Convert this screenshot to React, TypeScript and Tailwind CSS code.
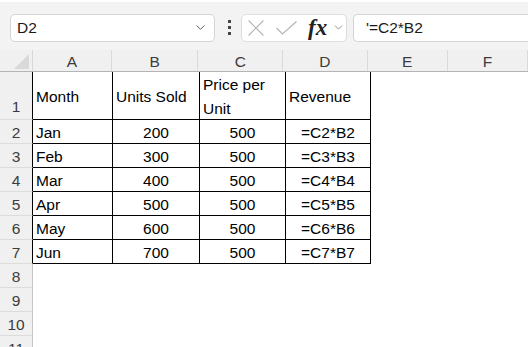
import { ChevronDown } from 'lucide-react'

const columns = [
  { key: 'A', width: 'w-[80px]' },
  { key: 'B', width: 'w-[87px]' },
  { key: 'C', width: 'w-[86px]' },
  { key: 'D', width: 'w-[85px]' },
  { key: 'E', width: 'w-[81px]' },
  { key: 'F', width: 'w-[81px]' },
]

const rows = [
  ['Jan', '200', '500', '=C2*B2'],
  ['Feb', '300', '500', '=C3*B3'],
  ['Mar', '400', '500', '=C4*B4'],
  ['Apr', '500', '500', '=C5*B5'],
  ['May', '600', '500', '=C6*B6'],
  ['Jun', '700', '500', '=C7*B7'],
]

const font = { fontFamily: '"Liberation Sans", Arial, sans-serif' }

export default function App() {
  return (
    <div className="h-[347px] w-[528px] overflow-hidden bg-white text-[15.5px] text-black" style={font}>
      <div className="h-[2px] bg-white shadow-[0_1px_2px_rgba(0,0,0,0.12)]" />
      <FormulaBar />
      <Sheet />
    </div>
  )
}

function FormulaBar() {
  return (
    <div className="flex h-[48px] items-center bg-[#f3f3f3] pl-[10px] pt-[3px]">
      <div className="flex h-[28px] w-[205px] items-center justify-between rounded-[5px] border border-[#d5d5d5] bg-white pl-[6px] pr-[6px]">
        <span className="pt-[1px] text-[#1a1a1a]">D2</span>
        <ChevronDown className="size-[15px] text-[#555]" strokeWidth={1.5} />
      </div>
      <div className="ml-[12px] flex w-[4px] flex-col items-center gap-[3px]">
        <span className="size-[3px] bg-[#444]" />
        <span className="size-[3px] bg-[#444]" />
        <span className="size-[3px] bg-[#444]" />
      </div>
      <div className="ml-[10px] flex h-[28px] w-[106px] items-center rounded-[5px] border border-[#dedede] bg-white pl-[6px]">
        <svg width="16" height="16" viewBox="0 0 16 16" className="shrink-0">
          <path d="M0.5 0.5 15.5 15.5M15.5 0.5 0.5 15.5" stroke="#b4b4b4" strokeWidth="1.2" fill="none" />
        </svg>
        <svg width="21" height="14" viewBox="0 0 21 14" className="ml-[12px] shrink-0">
          <path d="M0.5 7 6.5 13 20.5 0.5" stroke="#b4b4b4" strokeWidth="1.2" fill="none" />
        </svg>
        <span
          className="ml-[11px] pb-[1px] text-[23px] font-bold italic leading-none text-[#222]"
          style={{ fontFamily: '"Liberation Serif", "Times New Roman", serif' }}
        >
          fx
        </span>
        <ChevronDown className="ml-[5px] size-[13px] text-[#777]" strokeWidth={1.5} />
      </div>
      <div className="ml-[6px] flex h-[28px] flex-1 items-center rounded-l-[5px] border border-r-0 border-[#d5d5d5] bg-white pl-[12px]">
        <span className="pt-[1px] text-[#1a1a1a]">'=C2*B2</span>
      </div>
    </div>
  )
}

function Sheet() {
  return (
    <div>
      <div className="flex h-[22px] border-b border-[#b4b4b4] bg-[#f0f0f0] text-[#3c3c3c]">
        <div className="relative w-[33px] border-r border-[#d8d8d8]">
          <svg className="absolute bottom-[2px] right-[3px]" width="15" height="15" viewBox="0 0 15 15">
            <polygon points="15,0 15,15 0,15" fill="#d9d9d9" />
          </svg>
        </div>
        {columns.map((col) => (
          <div
            key={col.key}
            className={`${col.width} flex items-center justify-center border-r border-[#dadada] pt-[2px]`}
          >
            {col.key}
          </div>
        ))}
      </div>

      <Row label="1" tall>
        <Cell className="w-[80px]">Month</Cell>
        <Cell className="w-[87px]">Units Sold</Cell>
        <Cell className="w-[86px] flex-col !items-start justify-center leading-[24px]">
          <span>Price per</span>
          <span>Unit</span>
        </Cell>
        <Cell className="w-[85px]">Revenue</Cell>
      </Row>

      {rows.map((row, index) => (
        <Row key={row[0]} label={String(index + 2)}>
          <Cell className="w-[80px]">{row[0]}</Cell>
          <Cell className="w-[87px] justify-center">{row[1]}</Cell>
          <Cell className="w-[86px] justify-center">{row[2]}</Cell>
          <Cell className="w-[85px] justify-center">{row[3]}</Cell>
        </Row>
      ))}

      {['8', '9', '10', '11'].map((label) => (
        <Row key={label} label={label} empty />
      ))}
    </div>
  )
}

function Row({
  label,
  tall = false,
  empty = false,
  children,
}: Readonly<{ label: string; tall?: boolean; empty?: boolean; children?: React.ReactNode }>) {
  return (
    <div className={`flex ${tall ? 'h-[48px]' : 'h-[24px]'}`}>
      <div
        className={`flex w-[33px] justify-center border-b border-r border-b-[#dcdcdc] bg-[#f0f0f0] pt-[2px] text-[#3c3c3c] ${
          empty ? 'border-r-[#c4c4c4]' : 'border-r-black'
        } ${tall ? 'items-end pb-[1px]' : 'items-center'}`}
      >
        {label}
      </div>
      {children}
    </div>
  )
}

function Cell({ className = '', children }: Readonly<{ className?: string; children: React.ReactNode }>) {
  return (
    <div className={`flex items-center border-b border-r border-black px-[3px] pt-[2px] ${className}`}>
      {children}
    </div>
  )
}
